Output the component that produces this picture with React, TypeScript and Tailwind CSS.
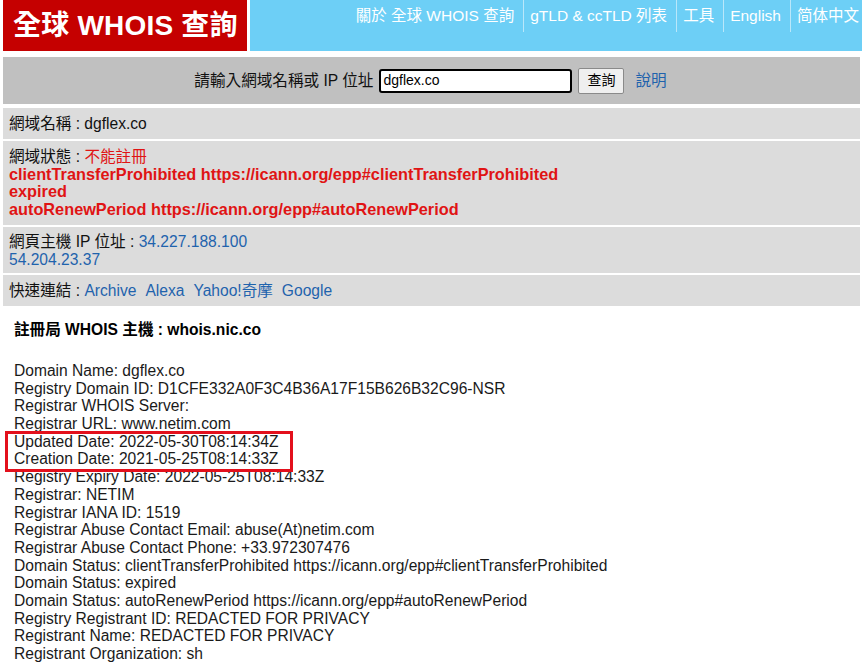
const FONT = "font-['Liberation_Sans','Arial','Noto_Sans_CJK_TC',sans-serif]";

const whoisTop = [
  "Domain Name: dgflex.co",
  "Registry Domain ID: D1CFE332A0F3C4B36A17F15B626B32C96-NSR",
  "Registrar WHOIS Server:",
  "Registrar URL: www.netim.com",
];

const whoisMarked = [
  "Updated Date: 2022-05-30T08:14:34Z",
  "Creation Date: 2021-05-25T08:14:33Z",
];

const whoisRest = [
  "Registry Expiry Date: 2022-05-25T08:14:33Z",
  "Registrar: NETIM",
  "Registrar IANA ID: 1519",
  "Registrar Abuse Contact Email: abuse(At)netim.com",
  "Registrar Abuse Contact Phone: +33.972307476",
  "Domain Status: clientTransferProhibited https://icann.org/epp#clientTransferProhibited",
  "Domain Status: expired",
  "Domain Status: autoRenewPeriod https://icann.org/epp#autoRenewPeriod",
  "Registry Registrant ID: REDACTED FOR PRIVACY",
  "Registrant Name: REDACTED FOR PRIVACY",
  "Registrant Organization: sh",
];

const nav = ["關於 全球 WHOIS 查詢", "gTLD & ccTLD 列表", "工具", "English", "简体中文"];

export default function App() {
  return (
    <div className={`w-[864px] h-[663px] overflow-hidden bg-white text-[15.6px] text-[#111] ${FONT}`}>
      {/* header */}
      <div className="flex h-[51px] pl-[3px] pr-[2px] gap-[3px]">
        <div className="w-[244px] bg-[#c50000] flex items-center pl-[10px]">
          <span className="text-white font-bold text-[28px] leading-none tracking-[0.2px]">全球 WHOIS 查詢</span>
        </div>
        <div className="flex-1 bg-[#6dcff6] flex justify-end items-start pr-[1px]">
          {nav.map((n, i) => (
            <span
              key={n}
              className={`text-white text-[15.5px] leading-[32px] pl-[6px] ${
                i === nav.length - 1 ? "pr-[2px]" : "pr-[9px]"
              } ${i > 0 ? "border-l border-[#b9e7fa]" : ""}`}
            >
              {n}
            </span>
          ))}
        </div>
      </div>

      {/* search bar */}
      <div className="mx-[3px] mt-[6px] mr-[4px] h-[47px] bg-[#c0c0c0] flex items-center justify-center gap-[6px] pr-[2px]">
        <span className="text-[#111]">請輸入網域名稱或 IP 位址</span>
        <div className="w-[193px] h-[24px] bg-white border-2 border-black rounded-[3px] flex items-center px-[2px] text-[14px] text-black">
          dgflex.co
        </div>
        <div className="h-[26px] w-[46px] bg-[#efefef] border border-[#8a8a8a] rounded-[2px] flex items-center justify-center text-[14px] text-black">
          查詢
        </div>
        <span className="ml-[5px] text-[#1f63ad]">說明</span>
      </div>

      {/* info rows */}
      <div className="mx-[3px] mr-[4px] mt-[4px] flex flex-col gap-[2px] leading-[17.7px]">
        <div className="bg-[#dcdcdc] h-[31px] flex items-center px-[6px]">
          網域名稱 : dgflex.co
        </div>
        <div className="bg-[#dcdcdc] px-[6px] pt-[7px] pb-[6px]">
          <div>
            網域狀態 : <span className="text-[#e01414]">不能註冊</span>
          </div>
          <div className="text-[#e01414] font-bold text-[16.3px]">
            <div>clientTransferProhibited https://icann.org/epp#clientTransferProhibited</div>
            <div>expired</div>
            <div>autoRenewPeriod https://icann.org/epp#autoRenewPeriod</div>
          </div>
        </div>
        <div className="bg-[#dcdcdc] px-[6px] pt-[6px] pb-[5px]">
          <div>
            網頁主機 IP 位址 : <span className="text-[#1f63ad]">34.227.188.100</span>
          </div>
          <div className="text-[#1f63ad]">54.204.23.37</div>
        </div>
        <div className="bg-[#dcdcdc] h-[31px] flex items-center px-[6px]">
          快速連結 :&nbsp;
          <span className="text-[#1f63ad] flex gap-[9px]">
            <span>Archive</span>
            <span>Alexa</span>
            <span>Yahoo!奇摩</span>
            <span>Google</span>
          </span>
        </div>
      </div>

      {/* whois text */}
      <div className="px-[14px] pt-[15px] leading-[17.7px] text-[#1a1a1a]">
        <div className="font-bold text-black">註冊局 WHOIS 主機 : whois.nic.co</div>
        <div className="h-[23px]" />
        {whoisTop.map((l) => (
          <div key={l}>{l}</div>
        ))}
        <div className="relative">
          {whoisMarked.map((l) => (
            <div key={l}>{l}</div>
          ))}
          <div className="absolute left-[-9px] top-[-2px] w-[288px] h-[41px] border-[3px] border-[#e3101c]" />
        </div>
        {whoisRest.map((l) => (
          <div key={l}>{l}</div>
        ))}
      </div>
    </div>
  );
}
